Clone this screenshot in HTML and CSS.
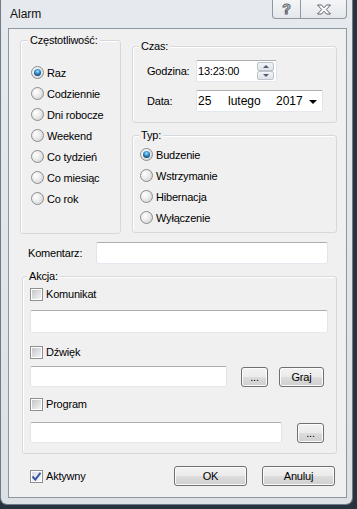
FILE: index.html
```html
<!DOCTYPE html>
<html lang="pl">
<head>
    <meta charset="UTF-8">
    <title>Alarm</title>
    <link rel="stylesheet" href="styles.css">
</head>
<body>
    <div class="window">
        <div class="titlebar">
            <span class="title">Alarm</span>
            <div class="caption-buttons">
                <span class="cap-btn help">?</span>
                <span class="cap-btn close">
                    <svg width="16" height="11" viewBox="0 0 16 11">
                        <path d="M1.5 1 H5.5 L8 3.8 L10.5 1 H14.5 L10.3 5.5 L14.5 10 H10.5 L8 7.2 L5.5 10 H1.5 L5.7 5.5 Z" fill="#fff" stroke="#5a6068" stroke-width="1" stroke-linejoin="round"/>
                    </svg>
                </span>
            </div>
        </div>

        <div class="client">
            <div class="top-row">
                <div class="group freq-group">
                    <span class="group-title">Częstotliwość:</span>
                    <div class="radio-list">
                        <div class="radio-row"><span class="radio checked"><span class="dot"></span></span>Raz</div>
                        <div class="radio-row"><span class="radio"></span>Codziennie</div>
                        <div class="radio-row"><span class="radio"></span>Dni robocze</div>
                        <div class="radio-row"><span class="radio"></span>Weekend</div>
                        <div class="radio-row"><span class="radio"></span>Co tydzień</div>
                        <div class="radio-row"><span class="radio"></span>Co miesiąc</div>
                        <div class="radio-row"><span class="radio"></span>Co rok</div>
                    </div>
                </div>

                <div class="right-col">
                    <div class="group time-group">
                        <span class="group-title">Czas:</span>
                        <div class="field-row first">
                            <span class="field-label">Godzina:</span>
                            <div class="textbox time-box">
                                <span class="time-text">13:23:00</span>
                                <span class="spin">
                                    <span class="spin-btn"><span class="arrow-up"></span></span>
                                    <span class="spin-btn"><span class="arrow-down"></span></span>
                                </span>
                            </div>
                        </div>
                        <div class="field-row">
                            <span class="field-label">Data:</span>
                            <div class="textbox date-box">
                                <span class="day">25</span>
                                <span class="month">lutego</span>
                                <span class="year">2017</span>
                                <span class="drop-arrow"></span>
                            </div>
                        </div>
                    </div>

                    <div class="group type-group">
                        <span class="group-title">Typ:</span>
                        <div class="radio-list">
                            <div class="radio-row"><span class="radio checked"><span class="dot"></span></span>Budzenie</div>
                            <div class="radio-row"><span class="radio"></span>Wstrzymanie</div>
                            <div class="radio-row"><span class="radio"></span>Hibernacja</div>
                            <div class="radio-row"><span class="radio"></span>Wyłączenie</div>
                        </div>
                    </div>
                </div>
            </div>

            <div class="comment-row">
                <span class="comment-label">Komentarz:</span>
                <div class="textbox comment-box"></div>
            </div>

            <div class="group action-group">
                <span class="group-title">Akcja:</span>
                <div class="action-body">
                    <div class="check-row msg-check"><span class="check"></span>Komunikat</div>
                    <div class="textbox msg-box"></div>
                    <div class="check-row sound-check"><span class="check"></span>Dźwięk</div>
                    <div class="input-row sound-row">
                        <div class="textbox sound-box"></div>
                        <button class="btn browse-btn">...</button>
                        <button class="btn play-btn">Graj</button>
                    </div>
                    <div class="check-row program-check"><span class="check"></span>Program</div>
                    <div class="input-row program-row">
                        <div class="textbox program-box"></div>
                        <button class="btn browse-btn">...</button>
                    </div>
                </div>
            </div>

            <div class="bottom-row">
                <div class="check-row active-check">
                    <span class="check checked">
                        <svg width="9" height="9" viewBox="0 0 9 9">
                            <path d="M0.5 4.5 L3.3 7.6 L8.5 0.8" fill="none" stroke="#3b55a0" stroke-width="2"/>
                        </svg>
                    </span>Aktywny
                </div>
                <button class="btn dlg-btn ok-btn">OK</button>
                <button class="btn dlg-btn">Anuluj</button>
            </div>
        </div>
    </div>
</body>
</html>
```

FILE: styles.css
```css
body {
    margin: 0;
    width: 357px;
    height: 509px;
    overflow: hidden;
    background-color: #27343f;
    font-family: "Liberation Sans", Arial, sans-serif;
    font-size: 11px;
    letter-spacing: -0.2px;
    color: #000;
}

/* window frame */
.window {
    width: 353px;
    height: 505px;
    box-sizing: border-box;
    display: flex;
    flex-direction: column;
    padding: 0 5px 6px 7px;
    background: linear-gradient(#e6e9ed, #dde1e6);
    border: 1px solid #6f7b87;
    border-top: none;
    border-radius: 0 0 7px 7px;
}
.titlebar {
    height: 28px;
    display: flex;
    align-items: flex-start;
}
.title {
    align-self: center;
    margin-left: 2px;
    font-size: 12px;
    letter-spacing: 0;
    color: #111;
}
.caption-buttons {
    margin-left: auto;
    display: flex;
    height: 19px;
}
.cap-btn {
    height: 19px;
    box-sizing: border-box;
    display: flex;
    align-items: center;
    justify-content: center;
    border: 1px solid #8e98a3;
    border-top: none;
    background: linear-gradient(#f4f5f7, #e4e7eb);
}
.help {
    width: 29px;
    border-radius: 0 0 0 4px;
    font-size: 14px;
    font-weight: bold;
    color: #fff;
    -webkit-text-stroke: 1px #5a6068;
}
.close {
    width: 46px;
    border-left: none;
    border-radius: 0 0 4px 0;
}

/* client area */
.client {
    flex: 1;
    background-color: #f0f0f0;
    border: 1px solid #8d97a2;
    padding: 11px 9px 0 11px;
}
.top-row {
    display: flex;
    align-items: flex-start;
}

/* group boxes */
.group {
    box-sizing: border-box;
    border: 1px solid #d5d9dd;
    border-radius: 3px;
    box-shadow: inset 1px 1px 0 #fff;
}
.group-title {
    display: table;
    margin: -7px 0 0 6px;
    padding: 0 2px;
    line-height: 13px;
    background-color: #f0f0f0;
}
.freq-group {
    width: 101px;
    height: 194px;
}
.freq-group .group-title {
    margin-left: 7px;
}
.freq-group .radio-list {
    margin-top: 15px;
    padding-left: 10px;
}
.right-col {
    margin: 6px 0 0 11px;
    width: 205px;
}
.time-group {
    height: 77px;
}
.type-group {
    margin-top: 12px;
    height: 98px;
}
.type-group .radio-list {
    margin-top: 2px;
    padding-left: 7px;
}

/* radio buttons */
.radio-row {
    display: flex;
    align-items: center;
    gap: 3px;
    height: 21px;
}
.radio {
    width: 13px;
    height: 13px;
    box-sizing: border-box;
    border-radius: 50%;
    border: 1px solid #8b8d8f;
    background: radial-gradient(circle at 35% 35%, #fff 0, #ebebeb 45%, #c9cacb 100%);
    display: flex;
    align-items: center;
    justify-content: center;
}
.radio .dot {
    width: 7px;
    height: 7px;
    border-radius: 50%;
    background: radial-gradient(circle at 50% 35%, #a8e6ff 0, #3d9ad6 2px, #17507f 4px);
}

/* text boxes */
.textbox {
    box-sizing: border-box;
    background-color: #fff;
    border: 1px solid #e2e3ea;
    border-top-color: #abadb3;
    border-bottom-color: #e3e9ef;
    border-radius: 2px;
}
.field-row {
    display: flex;
    align-items: center;
    height: 22px;
    margin-top: 8px;
    padding-left: 14px;
}
.field-row.first {
    margin-top: 7px;
}
.field-label {
    width: 49px;
}
.time-box {
    width: 81px;
    height: 22px;
    display: flex;
    align-items: center;
    padding-left: 1px;
}
.time-text {
    flex: 1;
}
.spin {
    width: 17px;
    height: 18px;
    margin-right: 2px;
    display: flex;
    flex-direction: column;
}
.spin-btn {
    flex: 1;
    display: flex;
    align-items: center;
    justify-content: center;
    border: 1px solid #bcc3cb;
    border-radius: 2px;
    background: linear-gradient(#f2f4f6, #dfe3e8);
}
.arrow-up, .arrow-down {
    width: 0;
    height: 0;
    border-left: 3px solid transparent;
    border-right: 3px solid transparent;
}
.arrow-up {
    border-bottom: 3px solid #4d5d77;
}
.arrow-down {
    border-top: 3px solid #4d5d77;
}
.date-box {
    width: 127px;
    height: 22px;
    display: flex;
    align-items: center;
    padding-left: 1px;
    font-size: 12px;
    letter-spacing: 0;
}
.day {
    width: 30px;
}
.month {
    width: 48px;
}
.drop-arrow {
    margin: 1px 5px 0 auto;
    width: 0;
    height: 0;
    border-left: 4px solid transparent;
    border-right: 4px solid transparent;
    border-top: 4px solid #000;
}

/* comment */
.comment-row {
    display: flex;
    align-items: center;
    margin-top: 8px;
    height: 22px;
}
.comment-label {
    width: 68px;
    margin-left: 8px;
}
.comment-box {
    width: 232px;
    height: 22px;
}

/* action group */
.action-group {
    margin: 12px 0 0 2px;
    width: 315px;
    height: 178px;
}
.action-group .group-title {
    margin-left: 4px;
}
.action-body {
    padding: 0 8px 0 7px;
}
.check-row {
    display: flex;
    align-items: center;
    gap: 3px;
    height: 16px;
}
.check {
    width: 13px;
    height: 13px;
    box-sizing: border-box;
    border: 1px solid #8e8f8f;
    padding: 1px;
    background: linear-gradient(135deg, #c3c6ca, #f4f4f4) content-box, #f4f4f4;
    box-shadow: inset 0 0 0 1px #fff;
}
.check.checked {
    display: flex;
    align-items: center;
    justify-content: center;
    padding: 0;
    background: linear-gradient(135deg, #d9dde6, #f8f8f8);
}
.msg-check {
    margin-top: 3px;
}
.msg-box {
    margin-top: 8px;
    height: 23px;
}
.sound-check {
    margin-top: 11px;
}
.input-row {
    display: flex;
    align-items: flex-start;
}
.sound-row {
    margin-top: 6px;
}
.sound-box {
    width: 197px;
    height: 21px;
}
.program-check {
    margin-top: 9px;
}
.program-row {
    margin-top: 10px;
}
.program-box {
    width: 252px;
    height: 21px;
}

/* buttons */
.btn {
    box-sizing: border-box;
    height: 20px;
    padding: 0;
    font-family: "Liberation Sans", Arial, sans-serif;
    font-size: 11px;
    letter-spacing: -0.2px;
    color: #000;
    border: 1px solid #707070;
    border-radius: 3px;
    background: linear-gradient(#f2f2f2 0%, #ebebeb 50%, #dddddd 51%, #cfcfcf 100%);
    box-shadow: inset 0 0 0 1px #fbfbfb;
}
.browse-btn {
    width: 27px;
    margin: 1px 0 0 14px;
}
.program-row .browse-btn {
    margin-left: 15px;
}
.play-btn {
    width: 45px;
    margin: 1px 0 0 11px;
}

/* bottom row */
.bottom-row {
    display: flex;
    align-items: center;
    margin-top: 12px;
    height: 20px;
}
.active-check {
    margin-left: 10px;
}
.dlg-btn {
    width: 73px;
}
.ok-btn {
    margin: 0 15px 0 auto;
}
.ok-btn + .dlg-btn {
    margin-right: 2px;
}
```
